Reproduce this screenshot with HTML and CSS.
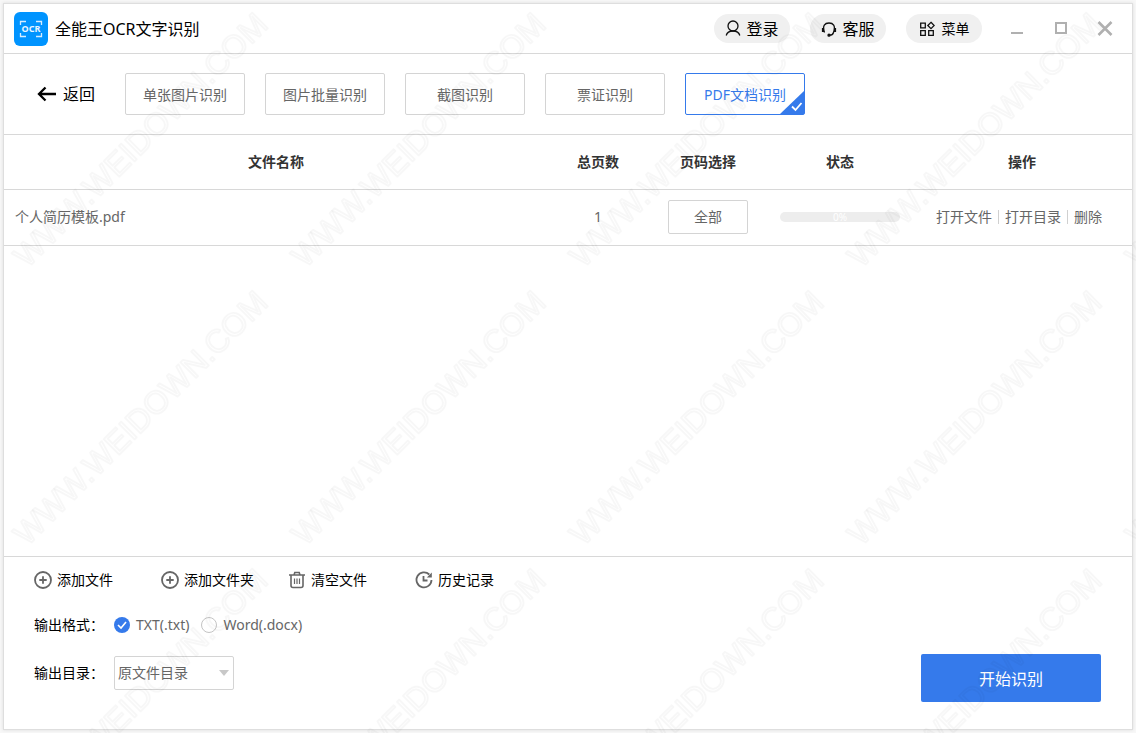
FILE: index.html
```html
<!DOCTYPE html>
<html lang="zh-CN">
<head>
<meta charset="utf-8">
<title>全能王OCR文字识别</title>
<link rel="stylesheet" href="styles.css">
</head>
<body>
<div class="window">
  <header class="titlebar">
    <svg class="logo" viewBox="0 0 34 34" aria-hidden="true">
      <rect width="34" height="34" rx="6" fill="#0094ff"/>
      <path d="M6.500 13V9.500H12M22 9.500H27.500V13M27.500 21V24.500H22M12 24.500H6.500V21" fill="none" stroke="#d5ecff" stroke-width="1.300"/>
      <text class="logo-text" x="17" y="20" text-anchor="middle">OCR</text>
    </svg>
    <h1 class="title">全能王OCR文字识别</h1>
    <div class="account">
      <button class="pill" type="button">
        <svg width="16" height="18" viewBox="0 0 16 18" class="line-icon"><circle cx="8" cy="6" r="5"/><path d="M1.200 15.500c.8-3 3.200-4.500 6.800-4.500s6 1.500 6.800 4.500"/></svg>
        登录
      </button>
      <button class="pill" type="button">
        <svg width="16" height="18" viewBox="0 0 16 18" class="line-icon"><path d="M3.500 12.500C1 5.500 4 3 8 3s7 2.500 4.500 9.500M12.500 12.500c-.5 1.700-1.800 2.700-4 2.700"/><path d="M2 8v4M14 8v4" stroke-width="2.200"/><circle cx="8" cy="15.200" r="1" fill="#111"/></svg>
        客服
      </button>
      <button class="pill pill-menu" type="button">
        <svg width="16" height="16" viewBox="0 0 16 16" class="line-icon"><path d="M1.700 2.200h4.600v4.600H1.700zM1.700 9.700h4.600v4.600H1.700zM9.700 9.700h4.600v4.600H9.700zM12 1.300l3.200 3.200L12 7.700 8.800 4.500z"/></svg>
        菜单
      </button>
    </div>
    <div class="controls">
      <button class="control" type="button" aria-label="最小化"><svg width="16" height="16" viewBox="0 0 16 16"><path d="M2 12h12" stroke-width="2"/></svg></button>
      <button class="control" type="button" aria-label="最大化"><svg width="16" height="16" viewBox="0 0 16 16"><rect x="3" y="2" width="10" height="10" stroke-width="2"/></svg></button>
      <button class="control" type="button" aria-label="关闭"><svg width="16" height="16" viewBox="0 0 16 16"><path d="M1.500 1L14.500 14M14.500 1L1.500 14" stroke-width="2.600"/></svg></button>
    </div>
  </header>

  <nav class="modes">
    <button class="back" type="button">
      <svg width="20" height="16" viewBox="0 0 20 16"><path d="M8.500 1.500L2 8l6.500 6.500M2 8h17" fill="none" stroke="#000" stroke-width="2.300"/></svg>
      返回
    </button>
    <button class="mode" type="button">单张图片识别</button>
    <button class="mode" type="button">图片批量识别</button>
    <button class="mode" type="button">截图识别</button>
    <button class="mode" type="button">票证识别</button>
    <button class="mode mode-active" type="button">PDF文档识别
      <svg class="mode-check" width="24" height="23" viewBox="0 0 24 23"><path d="M24 0v23H0z" fill="#357aeb"/><path d="M12 15.500l3.500 3.500 6-7" fill="none" stroke="#fff" stroke-width="1.800"/></svg>
    </button>
  </nav>

  <main class="files">
    <table class="file-table">
      <colgroup><col><col class="col-pages"><col class="col-range"><col class="col-status"><col class="col-actions"></colgroup>
      <thead>
        <tr><th>文件名称</th><th>总页数</th><th>页码选择</th><th>状态</th><th>操作</th></tr>
      </thead>
      <tbody>
        <tr>
          <td class="file-name">个人简历模板.pdf</td>
          <td>1</td>
          <td><button class="range" type="button">全部</button></td>
          <td><div class="progress" role="progressbar" aria-valuenow="0">0%</div></td>
          <td><div class="actions"><a href="#">打开文件</a><a href="#">打开目录</a><a href="#">删除</a></div></td>
        </tr>
      </tbody>
    </table>
  </main>

  <footer class="footer">
    <div class="tools">
      <button class="tool" type="button"><svg class="tool-icon" width="18" height="18" viewBox="0 0 18 18"><circle cx="9" cy="9" r="8"/><path d="M5.300 9h7.400M9 5.300v7.400"/></svg>添加文件</button>
      <button class="tool" type="button"><svg class="tool-icon" width="18" height="18" viewBox="0 0 18 18"><circle cx="9" cy="9" r="8"/><path d="M5.300 9h7.400M9 5.300v7.400"/></svg>添加文件夹</button>
      <button class="tool" type="button"><svg class="tool-icon" width="18" height="18" viewBox="0 0 18 18"><path d="M1 4h16M6 4l.8-2.500h4.400L12 4M3 4v10.500q0 2 2 2h8q2 0 2-2V4" stroke-width="1.600"/><path d="M6.500 7.500v5.500M9 7.500v5.500M11.500 7.500v5.500" stroke-width="1.200"/></svg>清空文件</button>
      <button class="tool" type="button"><svg class="tool-icon" width="18" height="18" viewBox="0 0 18 18"><path d="M14.300 3.500A7.500 7.500 0 1 0 16.500 9M8.500 5v4.500h4"/><path d="M16.800 1.500v5h-5z" fill="#666" stroke="none"/></svg>历史记录</button>
    </div>
    <div class="settings">
      <div class="fields">
        <div class="field" role="radiogroup" aria-label="输出格式">
          <span class="field-name">输出格式：</span>
          <label class="choice"><input class="radio" type="radio" name="format" checked>TXT(.txt)</label>
          <label class="choice"><input class="radio" type="radio" name="format">Word(.docx)</label>
        </div>
        <div class="field">
          <label class="field-name" for="folder">输出目录：</label>
          <select class="folder" id="folder"><option>原文件目录</option></select>
        </div>
      </div>
      <button class="start" type="button">开始识别</button>
    </div>
  </footer>
</div>
<svg class="watermark" aria-hidden="true">
  <defs>
    <pattern id="mark" x="4" y="-2" width="278" height="278" patternUnits="userSpaceOnUse">
      <text class="watermark-text" transform="translate(23 271) rotate(-45)">WWW.WEIDOWN.COM</text>
    </pattern>
  </defs>
  <rect width="100%" height="100%" fill="url(#mark)"/>
</svg>
</body>
</html>
```
FILE: styles.css
```css
* { box-sizing: border-box; }

body {
  margin: 0;
  min-height: 100vh;
  display: flex;
  padding: 3px;
  background: #f7f7f7;
  font: 14px/20px "Noto Sans", "Noto Sans CJK SC", sans-serif;
  color: #666;
}

button, select, input { margin: 0; font: inherit; color: inherit; }
button { padding: 0; border: 0; background: none; cursor: pointer; }
svg { flex: none; }

.window {
  flex: 1;
  display: flex;
  flex-direction: column;
  min-width: 0;
  background: #fff;
  border: 1px solid #dedede;
  box-shadow: 0 0 3px #ddd;
}

.titlebar {
  display: flex;
  align-items: center;
  height: 50px;
  padding: 0 19px 0 10px;
  border-bottom: 1px solid #d8d8d8;
}
.logo { width: 34px; height: 34px; }
.logo-text { font: bold 9px "Noto Sans", sans-serif; fill: #e8f5ff; }
.title { margin: 0 auto 0 7px; font-size: 16px; font-weight: 400; color: #000; }

.account { display: flex; gap: 20px; }
.pill {
  display: flex;
  align-items: center;
  justify-content: center;
  gap: 5px;
  width: 76px;
  height: 29px;
  border-radius: 15px;
  background: #f0f0f0;
  font-size: 16px;
  color: #000;
}
.pill-menu { gap: 7px; font-size: 14px; }
.line-icon { fill: none; stroke: #111; stroke-width: 1.3; }

.controls { display: flex; gap: 28px; margin-left: 27px; }
.control { display: flex; }
.control svg { fill: none; stroke: #b0b0b0; }

.modes {
  display: flex;
  align-items: center;
  gap: 20px;
  height: 81px;
  padding-left: 33px;
  border-bottom: 1px solid #d8d8d8;
}
.back { display: flex; align-items: center; gap: 6px; margin-right: 10px; font-size: 16px; color: #000; }
.mode {
  position: relative;
  width: 120px;
  height: 42px;
  padding-top: 2px;
  border: 1px solid #d4d4d4;
  border-radius: 2px;
}
.mode-active { border-color: #357aeb; color: #357aeb; }
.mode-check { position: absolute; right: 0; bottom: 0; }

.files { flex: 1; }
.file-table { width: 100%; table-layout: fixed; border-collapse: collapse; text-align: center; }
.col-pages { width: 100px; }
.col-range { width: 120px; }
.col-status { width: 144px; }
.col-actions { width: 220px; }
.file-table th, .file-table td { padding: 0; border-bottom: 1px solid #d8d8d8; }
.file-table th { height: 55px; padding-top: 2px; color: #333; }
.file-table td { height: 56px; }
.file-table thead tr { height: 55px; }
.file-table .file-name { padding-left: 11px; text-align: left; }
.range { width: 80px; height: 34px; border: 1px solid #d4d4d4; border-radius: 2px; }
.progress {
  width: 120px;
  height: 10px;
  margin: 0 auto;
  border-radius: 5px;
  background: #ededed;
  font-size: 10px;
  line-height: 10px;
  color: #fff;
}
.actions { display: flex; justify-content: center; align-items: center; padding-right: 6px; }
.actions a { color: inherit; text-decoration: none; line-height: 14px; }
.actions a + a { margin-left: 6px; padding-left: 6px; border-left: 1px solid #d0d0d0; }

.file-table { margin-top: -1px; }

.footer { padding: 13px 31px 27px 30px; border-top: 1px solid #d8d8d8; }
.tools { display: grid; grid-template-columns: repeat(4, 127px); }
.tool { display: flex; align-items: center; gap: 5px; color: #000; }
.tool-icon { fill: none; stroke: #666; stroke-width: 1.8; }

.settings { display: flex; justify-content: space-between; align-items: flex-end; }
.fields { display: grid; gap: 14px; padding: 18px 0 12px; }
.field { display: flex; align-items: center; height: 34px; }
.field-name { width: 80px; color: #000; }
.choice { display: flex; align-items: center; gap: 6px; margin-right: 12px; }
.radio {
  appearance: none;
  width: 16px;
  height: 16px;
  border: 1px solid #c4c4c4;
  border-radius: 50%;
}
.radio:checked {
  border: 0;
  background: #357aeb url("data:image/svg+xml,%3Csvg xmlns='http://www.w3.org/2000/svg' viewBox='0 0 16 16'%3E%3Cpath d='M4 8l3 3 5-6' fill='none' stroke='white' stroke-width='1.600'/%3E%3C/svg%3E");
}
.folder {
  appearance: none;
  width: 120px;
  height: 34px;
  padding: 0 3px;
  border: 1px solid #d4d4d4;
  border-radius: 2px;
  background: #fff url("data:image/svg+xml,%3Csvg xmlns='http://www.w3.org/2000/svg' width='10' height='6'%3E%3Cpath d='M0 0h10L5 6z' fill='%23c8c8c8'/%3E%3C/svg%3E") no-repeat right 4px center;
}
.start {
  width: 180px;
  height: 48px;
  padding-top: 2px;
  border-radius: 2px;
  background: #357aeb;
  font-size: 16px;
  color: #fff;
}

.watermark { position: absolute; inset: 0; width: 100%; height: 100%; pointer-events: none; }
.watermark-text {
  font: 32px "Liberation Sans", Arial, sans-serif;
  fill: none;
  stroke: #000;
  stroke-opacity: 0.03;
  stroke-width: 1.8;
  stroke-linejoin: round;
}
```
